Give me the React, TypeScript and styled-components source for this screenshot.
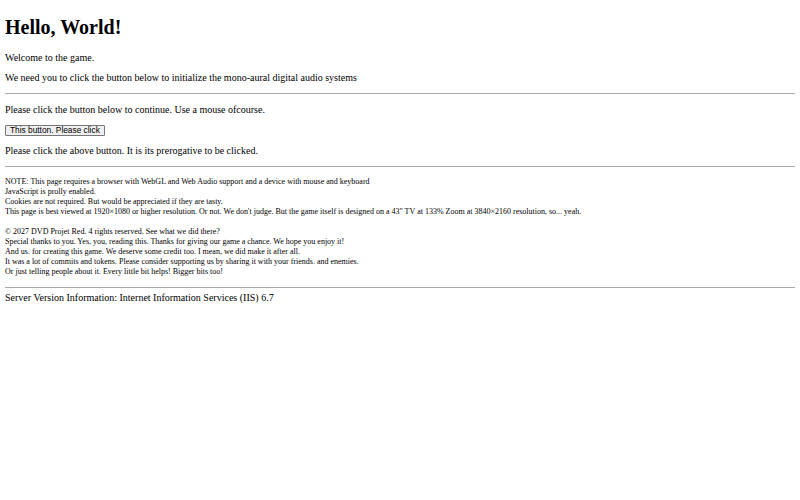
import React from "react";
import styled, { createGlobalStyle } from "styled-components";

const Global = createGlobalStyle`
  html, body { background: #fff; }
  body {
    margin: 5px;
    font-family: "Liberation Serif", "Times New Roman", serif;
    font-size: 10px;
    color: #000;
  }
`;

const Title = styled.h1`
  font-size: 20px;
  font-weight: bold;
  line-height: 23px;
  margin: 11.4px 0 12.4px;
`;

const Para = styled.p`
  margin: 9px 0;
  line-height: 11px;
`;

const Rule = styled.hr<{ $bottom?: number }>`
  margin: 10px 0 ${(p) => (p.$bottom ?? 10)}px;
  border: none;
  border-top: 1px solid #a8a8a8;
  height: 0;
`;

const Button = styled.button`
  font-family: "Liberation Sans", Arial, sans-serif;
  font-size: 8.33px;
  line-height: 9px;
  padding: 0 4px;
  background: #efefef;
  border: 1px solid #767676;
  border-radius: 1px;
  color: #000;
  vertical-align: middle;
`;

const Notes = styled.div`
  font-size: 8px;
  line-height: 10px;
  margin: 10px 0;
`;

const Gap = styled.div`
  height: 10px;
`;

const Footer = styled.div`
  line-height: 11px;
`;

export default function App() {
  return (
    <>
      <Global />
      <Title>Hello, World!</Title>
      <Para>Welcome to the game.</Para>
      <Para>We need you to click the button below to initialize the mono-aural digital audio systems</Para>
      <Rule />
      <Para>Please click the button below to continue. Use a mouse ofcourse.</Para>
      <Para>
        <Button>This button. Please click</Button>
      </Para>
      <Para>Please click the above button. It is its prerogative to be clicked.</Para>
      <Rule />
      <Notes>
        NOTE: This page requires a browser with WebGL and Web Audio support and a device with mouse and keyboard
        <br />
        JavaScript is prolly enabled.
        <br />
        Cookies are not required. But would be appreciated if they are tasty.
        <br />
        This page is best viewed at 1920×1080 or higher resolution. Or not. We don't judge. But the game itself is designed on a 43″ TV at 133% Zoom at 3840×2160 resolution, so... yeah.
        <Gap />
        © 2027 DVD Projet Red. 4 rights reserved. See what we did there?
        <br />
        Special thanks to you. Yes, you, reading this. Thanks for giving our game a chance. We hope you enjoy it!
        <br />
        And us. for creating this game. We deserve some credit too. I mean, we did make it after all.
        <br />
        It was a lot of commits and tokens. Please consider supporting us by sharing it with your friends. and enemies.
        <br />
        Or just telling people about it. Every little bit helps! Bigger bits too!
      </Notes>
      <Rule $bottom={4.5} />
      <Footer>Server Version Information: Internet Information Services (IIS) 6.7</Footer>
    </>
  );
}
